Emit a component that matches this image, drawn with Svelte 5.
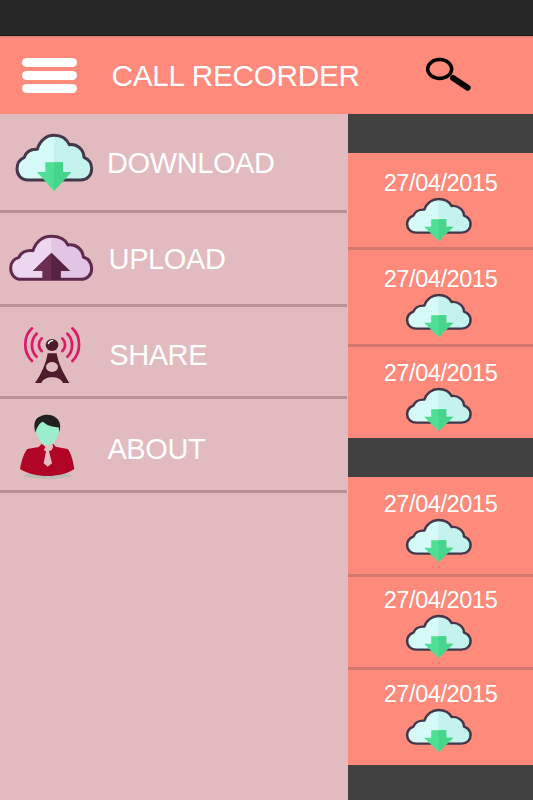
<script lang="ts">
  type MenuItem = { id: string; label: string; height: number; top: number; left: number; view: string };

  const menu: MenuItem[] = [
    { id: 'download', label: 'DOWNLOAD', height: 99, top: 34, left: 7, view: '0 -18 300 297' },
    { id: 'upload', label: 'UPLOAD', height: 94, top: 31, left: 8.6, view: '0 -21 300 282' },
    { id: 'share', label: 'SHARE', height: 92, top: 33, left: 9.2, view: '0 -24 300 276' },
    { id: 'about', label: 'ABOUT', height: 94, top: 35, left: 7.4, view: '0 -3 300 282' }
  ];

  const groups = [
    [
      { date: '27/04/2015', height: 97, top: 18 },
      { date: '27/04/2015', height: 97, top: 17 },
      { date: '27/04/2015', height: 91, top: 14 }
    ],
    [
      { date: '27/04/2015', height: 100, top: 15 },
      { date: '27/04/2015', height: 93, top: 11 },
      { date: '27/04/2015', height: 95, top: 12 }
    ]
  ];

  const cloud =
    'M84 180C62 180 51 163 51 146C51 130 59 118 73 112C78 97 92 87 112 88C119 62 139 46 162 46C183 46 200 57 208 74C231 71 251 88 252 112C267 118 275 131 275 146C275 165 262 180 242 180Z';
  const cloudRight =
    'M162 46C183 46 200 57 208 74C231 71 251 88 252 112C267 118 275 131 275 146C275 165 262 180 242 180H162Z';
  const upCloud =
    'M64 178C43 178 32 162 32 145C32 128 42 116 57 112C62 98 78 89 99 92C107 65 128 49 154 49C176 49 196 58 204 75C229 72 248 88 250 111C267 117 275 131 275 146C275 165 262 178 242 178Z';
  const upCloudRight =
    'M154 49C176 49 196 58 204 75C229 72 248 88 250 111C267 117 275 131 275 146C275 165 262 178 242 178H154Z';
</script>

{#snippet downloadCloud()}
  <path d={cloud} fill="#d6fbf6" />
  <path d={cloudRight} fill="#c3f3ec" />
  <path d={cloud} fill="none" stroke="#43374a" stroke-width="9" stroke-linejoin="round" />
  <path d="M136 127H189V156H214L162 213L111 156H136Z" fill="#4fdf94" />
  <path d="M162 127H189V156H214L162 213Z" fill="#45d58b" />
{/snippet}

<div class="app">
  <div class="status"></div>
  <header>
    <button class="burger" aria-label="Menu">
      <span></span><span></span><span></span>
    </button>
    <h1>CALL RECORDER</h1>
    <svg class="search" viewBox="486 108 144 111">
      <path d="M570 174L614 203" stroke="#050303" stroke-width="18" stroke-linecap="round" />
      <ellipse cx="530" cy="147" rx="36" ry="28.5" fill="none" stroke="#050303" stroke-width="10.5" />
    </svg>
  </header>

  <main>
    <nav>
      {#each menu as item (item.id)}
        <div class="item" style="height: {item.height}px">
          <svg class="icon" viewBox={item.view} style="height: {item.height}px">
            {#if item.id === 'download'}
              {@render downloadCloud()}
            {:else if item.id === 'upload'}
              <path d={upCloud} fill="#edd6ef" />
              <path d={upCloudRight} fill="#e2c5e6" />
              <path d={upCloud} fill="none" stroke="#61294c" stroke-width="9" stroke-linejoin="round" />
              <path d="M154 98L210 153H182V180H127V153H98Z" fill="#6b2d50" />
              <path d="M154 98L210 153H182V180H154Z" fill="#542442" />
            {:else if item.id === 'share'}
              <g fill="none" stroke="#d91a68" stroke-width="8" stroke-linecap="round">
                <path d="M96 40C69 65 69 112 96 138" />
                <path d="M110 56C91 74 91 108 110 125" />
                <path d="M125 70C114 81 114 98 125 108" />
                <path d="M217 40C244 65 244 112 217 138" />
                <path d="M202 56C221 74 221 108 202 125" />
                <path d="M187 70C198 81 198 98 187 108" />
              </g>
              <ellipse cx="156" cy="90" rx="19" ry="18" fill="#4e1b2b" />
              <path d="M145 86Q148 78 158 77" fill="none" stroke="#fff" stroke-width="4" stroke-linecap="round" />
              <path
                fill="#4e1b2b"
                fill-rule="evenodd"
                d="M143 115H170C175 145 190 175 208 204H189C181 181 132 181 124 204H105C124 177 138 146 143 115ZM156 141A18 15 0 1 0 156 171A18 15 0 1 0 156 141Z"
              />
            {:else}
              <ellipse cx="143" cy="227" rx="72" ry="9" fill="#b9bcb7" />
              <path
                fill="#b10526"
                d="M124 132L142 140L160 132L167 140L203 147C212 156 220 184 223 207C200 222 171 228 142 228C112 228 82 221 60 207C64 184 73 156 82 147L116 141Z"
              />
              <path fill="#e5bcc3" d="M129 132H156L160 140L155 150L147 154L156 190L143 200L131 190L138 154L131 150L136 142Z" />
              <path
                fill="#9cedce"
                d="M110 72C125 55 160 57 176 83C178 104 170 121 156 131C147 137 137 137 129 131C116 121 108 104 107 88Z"
              />
              <path
                fill="#20211f"
                d="M106 98C99 72 105 53 122 49C138 41 158 44 168 53C181 62 183 79 178 96L176 82C158 80 141 77 129 65C119 68 111 80 106 98Z"
              />
            {/if}
          </svg>
          <span class="label" style="padding: {item.top}px 0 0 {item.left}px">{item.label}</span>
        </div>
      {/each}
    </nav>

    <section>
      {#each groups as group}
        <div class="group">
          {#each group as call}
            <div class="call" style="height: {call.height}px; padding-top: {call.top}px">
              <time>{call.date}</time>
              <svg class="cloud" viewBox="47 42 233 171" preserveAspectRatio="none">
                {@render downloadCloud()}
              </svg>
            </div>
          {/each}
        </div>
      {/each}
    </section>
  </main>
</div>

<style>
  :global(body) {
    margin: 0;
  }

  .app {
    width: 533px;
    height: 800px;
    display: flex;
    flex-direction: column;
    overflow: hidden;
    background: #414141;
    color: #fff;
    font-family: "Liberation Sans", Arial, sans-serif;
  }

  .status {
    height: 36px;
    box-sizing: border-box;
    background: #262626;
    border-bottom: 1px solid #1f1a19;
  }

  header {
    height: 78px;
    box-sizing: border-box;
    display: flex;
    align-items: flex-start;
    background: #fd8a7a;
    border-top: 1px solid #d97b6d;
  }

  .burger {
    width: 55px;
    margin: 21px 0 0 22px;
    padding: 0;
    border: none;
    background: none;
    display: flex;
    flex-direction: column;
    gap: 4px;
  }

  .burger span {
    height: 9px;
    border-radius: 5px;
    background: #fff;
  }

  h1 {
    width: 259px;
    margin: 24px 0 0 34.5px;
    font-size: 29.8px;
    font-weight: 400;
    letter-spacing: -0.3px;
    line-height: 30px;
    white-space: nowrap;
  }

  .search {
    width: 48px;
    height: 37px;
    margin: 19px 0 0 54.5px;
  }

  main {
    flex: 1;
    display: flex;
    min-height: 0;
  }

  nav {
    width: 348px;
    box-sizing: border-box;
    padding-right: 1px;
    background: #e1bbbf;
  }

  .item {
    display: flex;
    align-items: flex-start;
    box-sizing: border-box;
    border-bottom: 3px solid #b99397;
  }

  .icon {
    width: 100px;
    flex-shrink: 0;
  }

  .label {
    font-size: 29px;
    letter-spacing: -0.4px;
    line-height: 30px;
  }

  section {
    flex: 1;
    display: flex;
    flex-direction: column;
    gap: 39px;
    padding-top: 39px;
  }

  .group {
    background: #fd8a7a;
  }

  .call {
    box-sizing: border-box;
    display: flex;
    flex-direction: column;
    align-items: center;
    gap: 3px;
    border-bottom: 3px solid #d1776b;
  }

  .call:last-child {
    border-bottom: none;
  }

  time {
    font-size: 23.5px;
    letter-spacing: -0.4px;
    line-height: 24px;
  }

  .cloud {
    width: 66px;
    height: 43px;
    margin-right: 4px;
    overflow: visible;
    flex-shrink: 0;
  }
</style>
